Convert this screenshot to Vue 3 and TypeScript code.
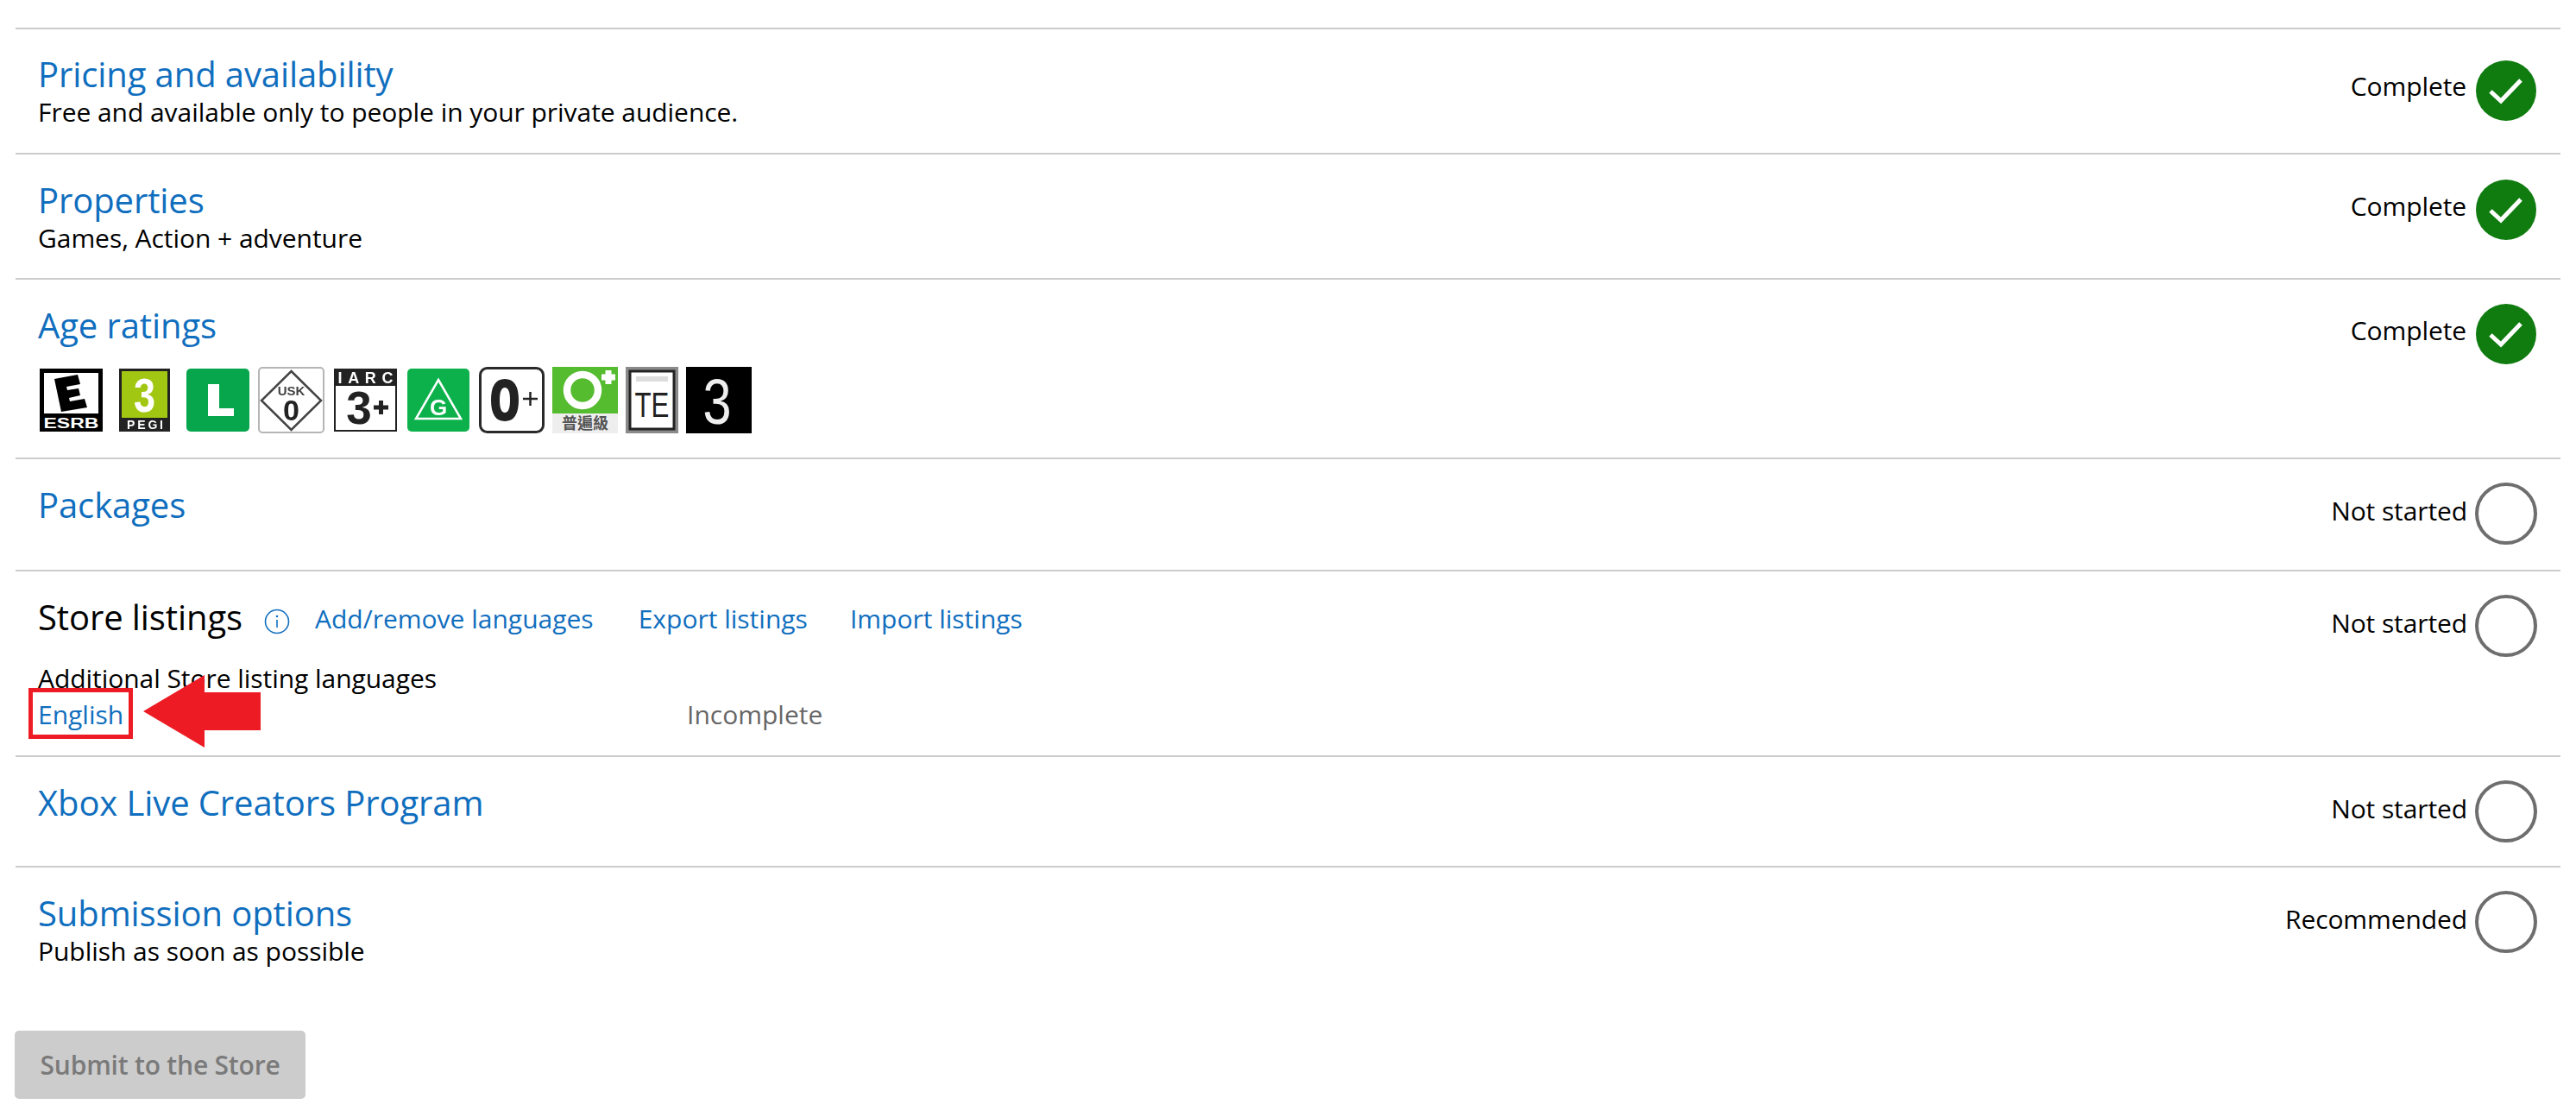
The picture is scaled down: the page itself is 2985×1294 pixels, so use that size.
<script setup lang="ts">
const blue = '#106ebe'
</script>

<template>
  <div class="page">
    <section class="row r1">
      <div class="main">
        <h2 class="title"><a>Pricing and availability</a></h2>
        <p class="sub">Free and available only to people in your private audience.</p>
      </div>
      <div class="status">
        <span class="st-text">Complete</span>
        <svg class="st-icon" viewBox="0 0 70 70"><circle cx="35" cy="35" r="35" fill="#107c10" /><path d="M17 36 L29 47 L52 23" fill="none" stroke="#fff" stroke-width="5" /></svg>
      </div>
    </section>

    <section class="row r2">
      <div class="main">
        <h2 class="title"><a>Properties</a></h2>
        <p class="sub">Games, Action + adventure</p>
      </div>
      <div class="status">
        <span class="st-text">Complete</span>
        <svg class="st-icon" viewBox="0 0 70 70"><circle cx="35" cy="35" r="35" fill="#107c10" /><path d="M17 36 L29 47 L52 23" fill="none" stroke="#fff" stroke-width="5" /></svg>
      </div>
    </section>

    <section class="row r3">
      <div class="main">
        <h2 class="title"><a>Age ratings</a></h2>
        <div class="badges">
          <svg width="83" height="77" viewBox="0 0 83 77">
            <rect x="0" y="2" width="73" height="73" fill="#000" />
            <rect x="5" y="7" width="63" height="47" fill="#fff" />
            <path d="M17 14 L44 9 L47 20 L31 23 L32 27 L45 25 L47 33 L34 36 L35 40 L52 37 L55 47 L25 52 Z" fill="#000" />
            <text x="36.5" y="71" class="b-text" font-size="16" font-weight="900" fill="#fff" text-anchor="middle" textLength="64" lengthAdjust="spacingAndGlyphs">ESRB</text>
          </svg>
          <svg width="69" height="77" viewBox="0 0 69 77">
            <rect x="0" y="2" width="59" height="73" fill="#222" />
            <rect x="3" y="5" width="53" height="54" fill="#a2c713" />
            <text x="29.5" y="52" class="b-text" font-size="56" font-weight="900" fill="#fff" text-anchor="middle" textLength="25" lengthAdjust="spacingAndGlyphs">3</text>
            <text x="30" y="72" class="b-text" font-size="14" font-weight="700" fill="#fff" text-anchor="middle" textLength="42">PEGI</text>
          </svg>
          <svg width="74" height="77" viewBox="0 0 74 77">
            <rect x="0" y="2" width="73" height="73" rx="5" fill="#07a64c" />
            <path d="M25 20 H38 V48 H55 V57 H25 Z" fill="#fff" />
          </svg>
          <svg width="79" height="77" viewBox="0 0 79 77">
            <rect x="1" y="1" width="75" height="75" rx="4" fill="#fff" stroke="#b5b5b5" stroke-width="2" />
            <path d="M38.5 5 L73 39 L38.5 73 L4 39 Z" fill="none" stroke="#444" stroke-width="2.5" />
            <text x="38.5" y="33" class="b-text" font-size="15" font-weight="700" fill="#444" text-anchor="middle">USK</text>
            <text x="38.5" y="62" class="b-text" font-size="34" font-weight="800" fill="#222" text-anchor="middle">0</text>
          </svg>
          <svg width="76" height="77" viewBox="0 0 76 77">
            <rect x="1" y="3" width="71" height="71" fill="#fff" stroke="#222" stroke-width="2" />
            <rect x="1" y="3" width="71" height="19" fill="#222" />
            <text x="36.5" y="19" class="b-text" font-size="18" font-weight="800" fill="#fff" text-anchor="middle" textLength="64">IARC</text>
            <text x="29" y="66" class="b-text" font-size="53" font-weight="900" fill="#222" text-anchor="middle">3</text>
            <path d="M46 47 H63 M54.5 39 V55" stroke="#222" stroke-width="5" fill="none" />
          </svg>
          <svg width="74" height="77" viewBox="0 0 74 77">
            <rect x="0" y="2" width="72" height="73" rx="5" fill="#0cb14b" />
            <path d="M36 15 L62 60 H10 Z" fill="none" stroke="#fff" stroke-width="2.5" />
            <text x="36" y="56" class="b-text" font-size="26" font-weight="800" fill="#fff" text-anchor="middle">G</text>
          </svg>
          <svg width="76" height="77" viewBox="0 0 76 77">
            <rect x="1.5" y="1.5" width="73" height="74" rx="8" fill="#fff" stroke="#2a2a2a" stroke-width="3" />
            <path d="M30 19 C22 19 19 26 19 38.5 C19 51 22 58 30 58 C38 58 41 51 41 38.5 C41 26 38 19 30 19 Z" fill="none" stroke="#222" stroke-width="10" />
            <path d="M51 37 H68 M59.5 29 V45" stroke="#222" stroke-width="2.5" fill="none" />
          </svg>
          <svg width="76" height="77" viewBox="0 0 76 77">
            <rect width="76" height="77" fill="#eee" />
            <rect width="76" height="54" fill="#55bb2f" />
            <circle cx="35" cy="27" r="18" fill="none" stroke="#fff" stroke-width="8.5" />
            <path d="M65 4 V20 M57 12 H73" stroke="#fff" stroke-width="7" fill="none" />
            <text x="38" y="72" class="b-cjk" font-size="18" font-weight="700" fill="#555" text-anchor="middle">普遍級</text>
          </svg>
          <svg width="61" height="77" viewBox="0 0 61 77">
            <rect width="61" height="77" fill="#8a8a8a" />
            <rect x="5" y="5" width="51" height="67" fill="#fff" stroke="#222" stroke-width="3" />
            <rect x="12" y="11" width="37" height="6" fill="#ddd" />
            <text x="30.5" y="58" class="b-text" font-size="40" fill="#222" text-anchor="middle" textLength="40" lengthAdjust="spacingAndGlyphs">TE</text>
          </svg>
          <svg width="76" height="77" viewBox="0 0 76 77">
            <rect width="76" height="77" fill="#000" />
            <text x="36" y="66" class="b-text" font-size="74" fill="#eee" text-anchor="middle" textLength="33" lengthAdjust="spacingAndGlyphs">3</text>
          </svg>
        </div>
      </div>
      <div class="status">
        <span class="st-text">Complete</span>
        <svg class="st-icon" viewBox="0 0 70 70"><circle cx="35" cy="35" r="35" fill="#107c10" /><path d="M17 36 L29 47 L52 23" fill="none" stroke="#fff" stroke-width="5" /></svg>
      </div>
    </section>

    <section class="row r4">
      <div class="main">
        <h2 class="title"><a>Packages</a></h2>
      </div>
      <div class="status">
        <span class="st-text">Not started</span>
        <span class="ring"></span>
      </div>
    </section>

    <section class="row r5">
      <div class="main">
        <div class="store-head">
          <h2 class="title black">Store listings</h2>
          <svg class="info" width="30" height="30" viewBox="0 0 30 30">
            <circle cx="15" cy="15" r="13.5" fill="none" :stroke="blue" stroke-width="1.6" />
            <circle cx="15" cy="9" r="1.3" :fill="blue" />
            <path d="M15 13 V22" :stroke="blue" stroke-width="1.6" />
          </svg>
          <a class="link l-add">Add/remove languages</a>
          <a class="link l-export">Export listings</a>
          <a class="link">Import listings</a>
        </div>
        <p class="sub add-lang">Additional Store listing languages</p>
        <div class="lang-row">
          <a class="link lang">English</a>
          <span class="incomplete">Incomplete</span>
        </div>
      </div>
      <div class="status">
        <span class="st-text">Not started</span>
        <span class="ring"></span>
      </div>
      <div class="callout"></div>
      <svg class="arrow" width="138" height="85" viewBox="0 0 138 85">
        <path d="M0 42 L71 0 V20 H136 V64 H71 V84 Z" fill="#ed1c24" />
      </svg>
    </section>

    <section class="row r6">
      <div class="main">
        <h2 class="title"><a>Xbox Live Creators Program</a></h2>
      </div>
      <div class="status">
        <span class="st-text">Not started</span>
        <span class="ring"></span>
      </div>
    </section>

    <section class="row r7">
      <div class="main">
        <h2 class="title"><a>Submission options</a></h2>
        <p class="sub">Publish as soon as possible</p>
      </div>
      <div class="status">
        <span class="st-text">Recommended</span>
        <span class="ring"></span>
      </div>
    </section>

    <button class="submit" disabled>Submit to the Store</button>
  </div>
</template>

<style scoped>
.page {
  box-sizing: border-box;
  width: 2985px;
  height: 1294px;
  padding: 32px 18px 0;
  background: #fff;
  font-family: "Open Sans", "Noto Sans", sans-serif;
  color: #000;
  overflow: hidden;
}
.row {
  position: relative;
  box-sizing: border-box;
  display: flex;
  justify-content: space-between;
  align-items: flex-start;
  width: 2949px;
  padding: 27px 28px 0 26px;
  border-top: 2px solid #ccc;
}
.r1 { height: 145px; padding-top: 26px; }
.r2 { height: 145px; }
.r3 { height: 208px; }
.r4 { height: 130px; }
.r5 { height: 215px; }
.r6 { height: 128px; }
.r7 { height: 191px; }
.r1 .status { margin-top: 10px; }
.r2 .status { margin-top: 2px; }
.r3 .status { margin-top: 1px; }
.title {
  margin: 0;
  font-size: 40px;
  line-height: 52px;
  font-weight: 500;
  letter-spacing: -0.1px;
  color: #106ebe;
  white-space: nowrap;
}
.title.black { color: #000; }
.sub {
  margin: 0;
  font-size: 30px;
  line-height: 36px;
  letter-spacing: -0.05px;
  white-space: nowrap;
}
.badges {
  display: flex;
  gap: 9px;
  margin: 22px 0 0 2px;
  filter: blur(0.4px);
}
.badges svg { overflow: visible; }
.b-text { font-family: "Liberation Sans", Arial, sans-serif; }
.b-cjk { font-family: "Noto Sans CJK TC", sans-serif; }
.store-head {
  display: flex;
  align-items: center;
}
.info { margin: 10px 29px 0 25px; }
.link {
  font-size: 30px;
  color: #106ebe;
  white-space: nowrap;
}
.store-head .link { margin-top: 2px; }
.l-add { margin-right: 52px; }
.l-export { margin-right: 49px; }
.add-lang { margin-top: 27px; }
.lang-row {
  display: flex;
  margin-top: 6px;
}
.lang { width: 752px; line-height: 36px; }
.incomplete {
  font-size: 30px;
  line-height: 36px;
  color: #666;
}
.status {
  display: flex;
  align-items: center;
  gap: 9px;
}
.st-text {
  font-size: 30px;
  letter-spacing: -0.1px;
  white-space: nowrap;
  margin-top: -8px;
}
.r1 .st-text { margin-top: -11px; }
.r2 .st-text { margin-top: -10px; }
.r3 .st-text { margin-top: -9px; }
.st-icon { width: 70px; height: 70px; display: block; margin-left: 2px; }
.ring {
  box-sizing: border-box;
  display: block;
  width: 72px;
  height: 72px;
  margin-right: -1px;
  border: 4px solid #6e6e6e;
  border-radius: 50%;
}
.callout {
  position: absolute;
  left: 15px;
  top: 135px;
  width: 121px;
  height: 59px;
  box-sizing: border-box;
  border: 5px solid #ed1c24;
}
.arrow {
  position: absolute;
  left: 148px;
  top: 120px;
}
.submit {
  display: block;
  margin: 0 0 0 -1px;
  width: 337px;
  height: 79px;
  border: 0;
  border-radius: 5px;
  background: #ccc;
  color: #7a7a7a;
  font-family: inherit;
  font-size: 30px;
  font-weight: 600;
  letter-spacing: -0.2px;
  padding: 0;
}
</style>
